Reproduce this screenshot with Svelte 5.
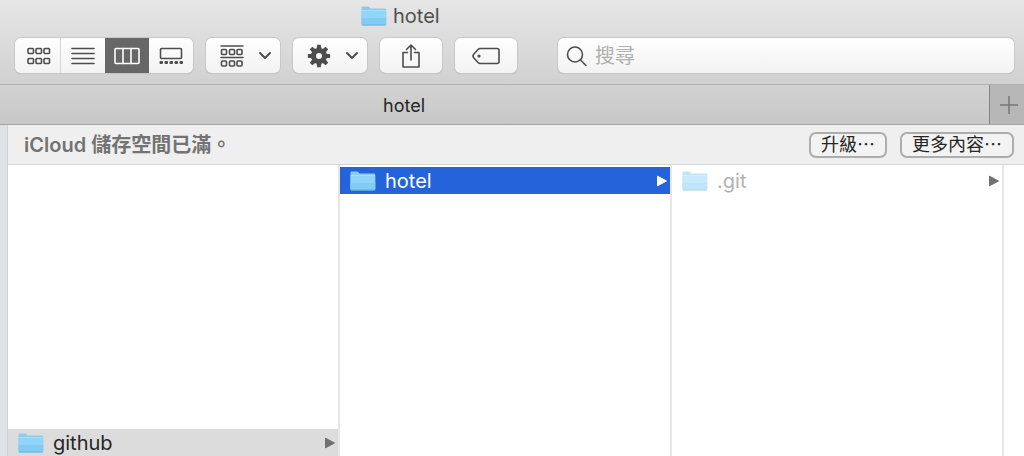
<script>
  let view = $state('columns');
  let query = $state('');
</script>

{#snippet folder()}
  <svg class="folder" viewBox="0 0 26 20" aria-hidden="true">
    <path d="M.5 18V1.7Q.5.5 1.7.5H7q.9 0 1.5.8l.8.9q.3.4 1 .4H24q1.2 0 1.2 1.2V18z" fill="#8accee" />
    <path d="M.5 4.8H25.2V18q0 1.2-1.2 1.2H1.7Q.5 19.2.5 18z" fill="#90d4f8" />
    <path d="M.5 12H25.2V18q0 1.2-1.2 1.2H1.7Q.5 19.2.5 18z" fill="#82ccf4" />
    <path d="M.8 4.6H24.9" stroke="#addff8" />
    <path d="M1 19H24.7" stroke="#65b1da" />
  </svg>
{/snippet}

{#snippet chevron()}
  <svg width="14" height="9" viewBox="0 0 14 9" class="line heavy" aria-hidden="true">
    <path d="M2 2 7 7 12 2" />
  </svg>
{/snippet}

{#snippet arrow()}
  <svg class="arrow" width="12" height="12" viewBox="0 0 12 12" aria-hidden="true">
    <path d="M1.5 1.2 10.5 6 1.5 10.8z" fill="currentColor" stroke="currentColor" stroke-linejoin="round" />
  </svg>
{/snippet}

<main class="window">
  <header>
    <h1>{@render folder()}<span>hotel</span></h1>
    <div class="toolbar">
      <div class="segments" role="group" aria-label="顯示方式">
        <button aria-label="圖像" class:active={view === 'icons'} onclick={() => (view = 'icons')}>
          <svg width="24" height="18" viewBox="0 0 24 18" class="line" aria-hidden="true">
            {#each [1, 9, 17] as x}
              {#each [1.5, 11.5] as y}
                <rect {x} {y} width="5.5" height="5" rx="1" />
              {/each}
            {/each}
          </svg>
        </button>
        <button aria-label="列表" class:active={view === 'list'} onclick={() => (view = 'list')}>
          <svg width="24" height="18" viewBox="0 0 24 18" class="line" aria-hidden="true">
            <path d="M1 1.5h22M1 6.5h22M1 11.5h22M1 16.5h22" />
          </svg>
        </button>
        <button aria-label="直欄" class:active={view === 'columns'} onclick={() => (view = 'columns')}>
          <svg width="26" height="18" viewBox="0 0 26 18" class="line" aria-hidden="true">
            <rect x="1" y="1.5" width="24" height="15" rx="1" />
            <path d="M9 1.5v15M17 1.5v15" />
          </svg>
        </button>
        <button aria-label="圖庫" class:active={view === 'gallery'} onclick={() => (view = 'gallery')}>
          <svg width="24" height="18" viewBox="0 0 24 18" class="line" aria-hidden="true">
            <rect x="1.500" y="1.500" width="21" height="10" rx="1" />
            {#each [0, 5, 10, 15, 20] as x}
              <rect x={x + 0.5} y="14" width="3.500" height="3" rx="1" class="solid" />
            {/each}
          </svg>
        </button>
      </div>

      <button class="tool wide" aria-label="群組">
        <svg width="24" height="22" viewBox="0 0 24 22" class="line" aria-hidden="true">
          <path d="M1 1h22M1 12.5h22" />
          {#each [1.5, 9.5, 17] as x}
            {#each [4.5, 16] as y}
              <rect {x} {y} width="5" height="5" rx="1" />
            {/each}
          {/each}
        </svg>
        {@render chevron()}
      </button>
      <button class="tool wide" aria-label="動作">
        <svg width="24" height="24" viewBox="-12 -12 24 24" fill="#4d4d4d" aria-hidden="true">
          {#each [0, 45, 90, 135, 180, 225, 270, 315] as angle}
            <path d="M-2.5-6 -1.8-11.2h3.6L2.5-6z" transform="rotate({angle})" />
          {/each}
          <circle r="5.500" fill="none" stroke="#4d4d4d" stroke-width="5" />
        </svg>
        {@render chevron()}
      </button>
      <button class="tool" aria-label="分享">
        <svg width="20" height="26" viewBox="0 0 20 26" class="line" aria-hidden="true">
          <path d="M6.5 9.5H2v14.5h16V9.5h-4.500M10 17V2M5.500 6.500 10 2l4.500 4.500" />
        </svg>
      </button>
      <button class="tool" aria-label="標籤">
        <svg width="28" height="18" viewBox="0 0 28 18" class="line" aria-hidden="true">
          <path d="M8.500 1.500H25q2 0 2 2v11q0 2-2 2H8.500Q7 16.500 6 15.500L1.500 10.500Q.5 9 1.500 7.500L6 2.500Q7 1.500 8.500 1.500z" />
          <circle cx="7" cy="9" r="1.600" class="solid" />
        </svg>
      </button>

      <label class="search">
        <svg width="22" height="22" viewBox="0 0 22 22" class="line" aria-hidden="true">
          <circle cx="9" cy="9.500" r="7.500" /><path d="M14.500 15 20 20.500" />
        </svg>
        <input type="text" aria-label="搜尋" placeholder="搜尋" bind:value={query} />
      </label>
    </div>
  </header>

  <nav class="tabs" aria-label="標籤頁">
    <button class="tab">hotel</button>
    <button class="add" aria-label="新增標籤頁">
      <svg width="20" height="20" viewBox="0 0 20 20" aria-hidden="true">
        <path d="M10 1v18M1 10h18" stroke="#777" stroke-width="1.500" />
      </svg>
    </button>
  </nav>

  <div class="body">
    <aside></aside>
    <section class="content">
      <div class="banner">
        <strong>iCloud 儲存空間已滿。</strong>
        <button>升級⋯</button>
        <button>更多內容⋯</button>
      </div>
      <div class="columns">
        <div class="column first">
          <button class="row parent">{@render folder()}<span>github</span>{@render arrow()}</button>
        </div>
        <div class="column">
          <button class="row selected">{@render folder()}<span>hotel</span>{@render arrow()}</button>
        </div>
        <div class="column">
          <button class="row hidden-file">{@render folder()}<span>.git</span>{@render arrow()}</button>
        </div>
        <div class="rest"></div>
      </div>
    </section>
  </div>
</main>

<style>
  :global(body) {
    margin: 0;
  }
  .window {
    display: flex;
    flex-direction: column;
    min-height: 100vh;
    background: #fff;
    color: #262626;
    font: 20px/28px Inter, "Noto Sans CJK TC", sans-serif;
  }
  * {
    box-sizing: border-box;
  }
  button,
  input {
    margin: 0;
    padding: 0;
    border: 0;
    background: none;
    color: inherit;
    font: inherit;
  }
  svg {
    display: block;
    flex: none;
  }
  .line {
    fill: none;
    stroke: #4d4d4d;
    stroke-width: 1.6px;
    stroke-linecap: round;
    stroke-linejoin: round;
  }
  .heavy {
    stroke-width: 2px;
  }
  .solid {
    fill: #4d4d4d;
    stroke: none;
  }
  .folder {
    width: 26px;
    height: 20px;
  }

  header {
    padding: 2px 10px 11px 15px;
    border-bottom: 1px solid #b0b0b0;
    background: linear-gradient(#e6e6e6, #d1d1d1);
  }
  h1 {
    display: flex;
    align-items: center;
    gap: 6px;
    margin: 0 0 8px;
    padding-left: 346px;
    color: #505050;
    font-size: 20px;
    font-weight: 400;
    line-height: 28px;
  }
  .toolbar {
    display: flex;
    gap: 13px;
  }
  .segments,
  .tool,
  .search {
    height: 35px;
    border-radius: 6px;
    background: linear-gradient(#fefefe, #f3f3f3);
    box-shadow: 0 0 0 1px #c8c8c8, 0 1px 1px #aaa;
  }
  .segments {
    display: flex;
    overflow: hidden;
  }
  .segments button {
    display: grid;
    place-items: center;
    width: 44px;
  }
  .segments button:first-child {
    width: 46px;
    padding-left: 2px;
    border-right: 1px solid #d5d5d5;
  }
  .segments .active {
    background: #676767;
  }
  .active .line {
    stroke: #fff;
  }
  .tool {
    display: flex;
    align-items: center;
    justify-content: center;
    width: 62px;
  }
  .wide {
    gap: 14px;
    width: 74px;
    padding-left: 6px;
  }
  .search {
    display: flex;
    align-items: center;
    flex: 1;
    gap: 7px;
    margin-left: 28px;
    padding: 0 8px;
  }
  .search input {
    flex: 1;
    min-width: 0;
    outline: 0;
  }
  .search input::placeholder {
    color: #b0b0b0;
    opacity: 1;
  }

  .tabs {
    display: flex;
    height: 40px;
    border-bottom: 1px solid #a5a5a5;
    background: linear-gradient(#d2d2d2, #c8c8c8);
  }
  .tab {
    flex: 1;
    padding: 2px 0 0 383px;
    font-size: 18px;
    text-align: left;
  }
  .add {
    display: grid;
    place-items: center;
    width: 35px;
    padding-left: 4px;
    border-left: 1px solid #858585;
    background: #b7b7b7;
  }

  .body {
    display: flex;
    flex: 1;
  }
  aside {
    width: 8px;
    border-right: 1px solid #cfcfd2;
    background: #dfe1e6;
  }
  .content {
    display: flex;
    flex: 1;
    flex-direction: column;
  }
  .banner {
    display: flex;
    align-items: center;
    gap: 13px;
    height: 40px;
    padding: 0 10px 0 16px;
    border-bottom: 1px solid #d6d6d6;
    background: #efefef;
  }
  .banner strong {
    flex: 1;
    color: #737373;
    font-weight: 600;
  }
  .banner button {
    height: 26px;
    padding: 0 10px;
    border: 2px solid #adadad;
    border-radius: 7px;
    background: #f3f3f3;
    font-size: 18px;
    line-height: 22px;
  }

  .columns {
    display: flex;
    flex: 1;
  }
  .column {
    display: flex;
    flex: 332;
    flex-direction: column;
    padding-top: 2px;
    border-right: 2px solid #e6e6e6;
  }
  .first {
    justify-content: flex-end;
  }
  .rest {
    flex: 20;
  }
  .row {
    display: flex;
    align-items: center;
    gap: 9px;
    height: 27px;
    padding: 0 2px 0 10px;
    text-align: left;
  }
  .row span {
    flex: 1;
  }
  .arrow {
    color: #707070;
  }
  .parent {
    background: #dcdcdc;
  }
  .selected {
    background: #2463d9;
    color: #fff;
  }
  .selected .arrow {
    color: #fff;
  }
  .hidden-file span {
    color: #b2b2b2;
  }
  .hidden-file .folder {
    opacity: 0.5;
  }
</style>
